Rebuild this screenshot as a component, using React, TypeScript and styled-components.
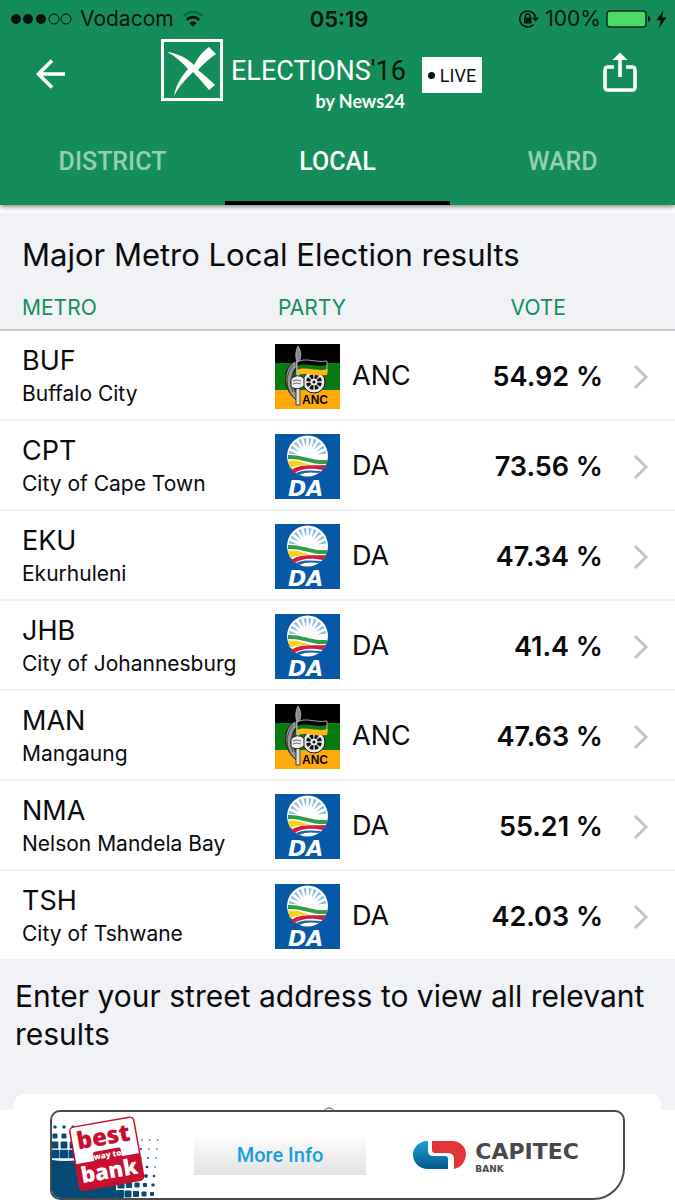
import React from "react";
import styled, { createGlobalStyle } from "styled-components";

const GlobalStyle = createGlobalStyle`
  *, *::before, *::after { box-sizing: border-box; }
  body {
    margin: 0;
    background: #fff;
    color: #0a0a0c;
    font-family: Inter, "Liberation Sans", sans-serif;
  }
  h1, h2, p { margin: 0; font-weight: 400; }
  svg { flex: none; overflow: visible; }
`;

const green = "#148d5b";
const pale = "#f1f2f5";

const Screen = styled.div`
  min-height: 100vh;
  display: flex;
  flex-direction: column;
`;

const Header = styled.header`
  background: ${green};
  box-shadow: 0 1px 6px rgba(0, 0, 0, 0.6);
  margin-bottom: 8px;
`;

const StatusBar = styled.div`
  display: grid;
  grid-template-columns: 1fr auto 1fr;
  align-items: center;
  height: 37px;
  padding: 0 8px 0 11px;
  font-size: 21px;
  line-height: 26px;
  color: #06140d;
`;

const StatusGroup = styled.div<{ $end?: boolean }>`
  display: flex;
  align-items: center;
  justify-content: ${(p) => (p.$end ? "flex-end" : "flex-start")};
  gap: ${(p) => (p.$end ? 5 : 8)}px;
`;

const Clock = styled.time`
  font-weight: 600;
  font-size: 22px;
`;

const TitleBar = styled.div`
  display: grid;
  grid-template-columns: 1fr auto 1fr;
  align-items: start;
  height: 80px;
  padding: 0 37px 0 34px;
`;

const IconButton = styled.button<{ $end?: boolean }>`
  justify-self: ${(p) => (p.$end ? "end" : "start")};
  display: flex;
  padding: 0;
  margin-top: 12px;
  border: 0;
  background: none;
  color: #fff;
  cursor: pointer;
`;

const Brand = styled.div`
  display: flex;
  align-items: flex-start;
  gap: 8px;
  padding-top: 2px;
  margin-right: 29px;
`;

const Wordmark = styled.h1`
  display: flex;
  flex-direction: column;
  width: 174px;
  padding-top: 12px;
  color: #fff;
`;

const WordmarkName = styled.span`
  font-family: Roboto, sans-serif;
  font-size: 27px;
  line-height: 40px;
  white-space: nowrap;
`;

const Year = styled.span`
  color: #06140d;
`;

const Byline = styled.span`
  align-self: flex-end;
  font-family: Lato, sans-serif;
  font-weight: 700;
  font-size: 18px;
  line-height: 20px;
`;

const LiveTag = styled.span`
  display: flex;
  align-items: center;
  justify-content: center;
  gap: 5px;
  width: 60px;
  height: 36px;
  margin: 18px 0 0 9px;
  background: #fff;
  color: #06140d;
  font-family: Roboto, sans-serif;
  font-size: 18px;
`;

const LiveDot = styled.span`
  width: 7px;
  height: 7px;
  border-radius: 50%;
  background: currentColor;
`;

const Tabs = styled.nav`
  display: grid;
  grid-template-columns: repeat(3, 1fr);
`;

const Tab = styled.button<{ $active?: boolean }>`
  height: 88px;
  padding: 4px 0 0;
  border: 0;
  border-bottom: 4px solid ${(p) => (p.$active ? "#000" : "transparent")};
  background: none;
  color: ${(p) => (p.$active ? "#fff" : "#93d1b2")};
  font-family: Roboto, sans-serif;
  font-weight: 500;
  font-size: 25px;
  cursor: pointer;
`;

const Main = styled.main`
  flex: 1;
  display: flex;
  flex-direction: column;
  background: ${pale};
`;

const Heading = styled.h2`
  padding: 22px 22px 0;
  font-size: 31px;
  line-height: 40px;
`;

const Results = styled.table`
  width: 100%;
  table-layout: fixed;
  border-collapse: collapse;
`;

const Col = styled.col<{ $width?: number }>`
  width: ${(p) => (p.$width ? `${p.$width}px` : "auto")};
`;

const HeadCell = styled.th<{ $left?: number; $right?: number }>`
  height: 55px;
  padding: 12px ${(p) => p.$right ?? 0}px 0 ${(p) => p.$left ?? 0}px;
  border-bottom: 2px solid #c8c8ca;
  color: ${green};
  font-weight: 400;
  font-size: 21px;
  line-height: 26px;
  text-align: ${(p) => (p.$right ? "right" : "left")};
`;

const Row = styled.tr`
  height: 90px;
  background: #fff;
  border-bottom: 2px solid #f0f0f2;
  &:last-child {
    height: 89px;
    border-bottom: 0;
  }
`;

const Cell = styled.td<{ $first?: boolean }>`
  padding: ${(p) => (p.$first ? "4px 0 0 22px" : "2px 0 0")};
  text-align: left;
  font-weight: 400;
`;

const Code = styled.div`
  font-size: 27px;
  line-height: 34px;
`;

const City = styled.div`
  font-size: 21px;
  line-height: 32px;
  white-space: nowrap;
`;

const Party = styled.div`
  display: flex;
  align-items: center;
  gap: 12px;
  font-size: 27px;
  line-height: 36px;
`;

const Vote = styled.td`
  padding: 2px 0 0;
  text-align: right;
  font-weight: 600;
  font-size: 27px;
  white-space: nowrap;
`;

const RowLink = styled.a`
  display: flex;
  padding-left: 29px;
  color: #c3c3c8;
`;

const Prompt = styled.p`
  padding: 18px 15px 0;
  font-size: 30px;
  line-height: 38px;
`;

const SearchCard = styled.section`
  flex: 1 0 16px;
  display: flex;
  justify-content: center;
  max-height: 16px;
  margin: 41px 14px 0;
  padding: 13px 18px 0 0;
  overflow: hidden;
  border-radius: 10px 10px 0 0;
  background: #fff;
`;

const AdBar = styled.footer`
  position: sticky;
  bottom: 0;
  padding: 0 50px;
  background: #fff;
`;

const Ad = styled.div`
  display: flex;
  align-items: center;
  height: 90px;
  padding-right: 44px;
  overflow: hidden;
  border: 2px solid #4c4a4b;
  border-radius: 10px 10px 32px 10px;
  background: #fff;
`;

const MoreInfo = styled.button`
  width: 172px;
  height: 40px;
  margin-left: 32px;
  border: 0;
  background: linear-gradient(#fdfdfd, #e2e3e5);
  color: #1c9ddb;
  font-family: Roboto, sans-serif;
  font-weight: 500;
  font-size: 20px;
  cursor: pointer;
`;

const Capitec = styled.div`
  display: flex;
  align-items: center;
  gap: 9px;
  margin-left: auto;
`;

const CapitecName = styled.div`
  padding-top: 4px;
  font-family: "DejaVu Sans", sans-serif;
  font-weight: 700;
  font-size: 22px;
  line-height: 24px;
  color: #48474a;
`;

const CapitecSub = styled.div`
  font-size: 9px;
  line-height: 10px;
`;

const SignalDots = () => (
  <svg width="61" height="12" viewBox="0 0 61 12" aria-hidden="true">
    {[5, 17, 30].map((x) => (
      <circle key={x} cx={x} cy="6" r="5" fill="#06140d" />
    ))}
    {[43, 55].map((x) => (
      <circle key={x} cx={x} cy="6" r="5" fill="none" stroke="#06140d" />
    ))}
  </svg>
);

const Wifi = () => (
  <svg width="22" height="18" viewBox="0 0 22 18" fill="none" aria-hidden="true">
    <path d="M1.500 6.200C7 .6 15 .6 20.500 6.200" stroke="#0d6c42" strokeWidth="2.400" />
    <path d="M4.600 10C8.400 6.200 13.600 6.200 17.400 10" stroke="#06140d" strokeWidth="2.600" />
    <path d="M7.300 13c2.200-2 5.200-2 7.400 0L11 16.800z" fill="#06140d" />
  </svg>
);

const RotationLock = () => (
  <svg width="22" height="20" viewBox="0 0 22 20" fill="none" stroke="#06140d" aria-hidden="true">
    <path d="M15.500 15.500A8 8 0 1 1 17.500 8" strokeWidth="1.500" />
    <path d="M14 8.500h7l-3.400 4z" fill="#06140d" stroke="none" />
    <rect x="6" y="8.500" width="7.500" height="6" fill="#06140d" stroke="none" />
    <path d="M7.500 9V7a2.200 2.200 0 0 1 4.400 0v2" strokeWidth="1.400" />
  </svg>
);

const Battery = () => (
  <svg width="45" height="18" viewBox="0 0 45 18" aria-hidden="true">
    <rect x="1" y="1" width="39" height="16" rx="3" fill="#4cd964" stroke="#0a2c1b" strokeWidth="1.500" />
    <path d="M42 6q2.500 1 2.500 3T42 12z" fill="#06140d" />
  </svg>
);

const Bolt = () => (
  <svg width="11" height="18" viewBox="0 0 11 18" aria-hidden="true">
    <path d="M7.500 0 .5 10.200h4L3 18l7.500-10.600H6.300z" fill="#06140d" />
  </svg>
);

const BackArrow = () => (
  <svg width="34" height="50" viewBox="0 0 34 50" fill="none" stroke="currentColor" strokeWidth="3.600" aria-hidden="true">
    <path d="M31 25H4M18 11.500 4.500 25 18 38.500" />
  </svg>
);

const Share = () => (
  <svg width="38" height="44" viewBox="0 0 38 44" fill="none" stroke="currentColor" strokeWidth="3.600" aria-hidden="true">
    <path d="M14 18H7.500a2.500 2.500 0 0 0-2.500 2.500v18A2.500 2.500 0 0 0 7.500 41h25a2.500 2.500 0 0 0 2.500-2.500v-18a2.500 2.500 0 0 0-2.500-2.500H26" />
    <path d="M20 28V9" />
    <path d="M12.500 11 20 3.500 27.500 11z" fill="currentColor" stroke="none" />
  </svg>
);

const BallotCross = () => (
  <svg width="62" height="62" viewBox="0 0 62 62" aria-hidden="true">
    <rect x="1.500" y="1.500" width="59" height="59" fill="none" stroke="#fff" strokeWidth="3" />
    <path d="M6 13C16 14 26 19 33 26C37 18 42 12 48 8L55 15C48 20 42 25 37 31C43 36 49 41 54 46L48 51C42 44 37 38 32 33C25 40 18 47 13 57C15 46 20 38 27 30C21 23 14 17 6 13Z" fill="#fff" />
  </svg>
);

const AncLogo = () => (
  <svg width="65" height="65" viewBox="0 0 65 65" role="img" aria-label="ANC flag">
    <path d="M0 0h65v19H0z" fill="#000" />
    <path d="M0 19h65v27H0z" fill="#087a12" />
    <path d="M0 46h65v19H0z" fill="#ffa90a" />
    <path d="M21 17C8 22 6 46 23 57l-1-7C16 43 16 29 22 23z" fill="#999" stroke="#111" />
    <path d="M18 21c-6 8-8 18-3 27M20 24c-5 8-5 17-2 24" fill="none" stroke="#333" strokeWidth=".8" />
    <path d="M21 61V17h4v44z" fill="#ddd" stroke="#222" strokeWidth=".8" />
    <path d="M23 2q5 8 1 16h-2q-3-8 1-16z" fill="#888" stroke="#ddd" strokeWidth=".6" />
    <circle cx="39" cy="38" r="11" fill="#eee" stroke="#111" />
    {[0, 45, 90, 135, 180, 225, 270, 315].map((a) => (
      <path key={a} d="M38 34.500 36.800 30.500q2.200-1 4.400 0L40 34.500z" fill="#111" transform={`rotate(${a + 22} 39 38)`} />
    ))}
    <circle cx="39" cy="38" r="1.500" fill="#111" />
    <path d="M22 18c9-5 18 1 30-1v5c-11 3-21-3-30 1z" fill="#050505" />
    <path d="M22 22c9-4 19 2 30-1v5c-11 3-21-3-30 1z" fill="#087a12" />
    <path d="M22 26c9-4 19 2 31-1l-1 6c-11 2-20-3-30 0z" fill="#ffb514" />
    <path d="M22 31V18c9-5 18 1 30-1v9" fill="none" stroke="#ccc" strokeWidth=".8" />
    <path d="M16 35q6-6 13-1v8q-6 5-13 1z" fill="#eee" stroke="#222" />
    <path d="M18 37q4-2 8 0M18 40q4-2 8 0" fill="none" stroke="#333" strokeWidth=".7" />
    <text x="27" y="60" fontFamily="Liberation Sans, sans-serif" fontWeight="700" fontSize="12" fill="#080808">ANC</text>
  </svg>
);

const DaLogo = () => (
  <svg width="65" height="65" viewBox="0 0 65 65" role="img" aria-label="DA emblem">
    <path d="M0 0h65v65H0z" fill="#0759a8" />
    <circle cx="32.500" cy="22" r="20.500" fill="#fff" />
    {[-75, -58, -41, -24, -8, 8, 24, 41, 58, 75].map((a) => (
      <path key={a} d="M31 4h3l-1.500 9z" fill="#8dbbe2" transform={`rotate(${a} 32.500 23)`} />
    ))}
    <path d="M13 21c12-1 24 6 39 5v4c-15 1-26-6-39-5z" fill="#2f9f47" />
    <path d="M13 27c9-2 15 2 23 4-8 0-15 0-21 3z" fill="#f7d417" />
    <path d="M16 36c10-7 22-4 35-5l-3 5c-13-2-19-2-29 3z" fill="#cf1f3c" />
    <path d="M21 39c9-4 17-2 25-2l-2 2c-8-1-14-1-20 2z" fill="#1a61ac" />
    <text x="13" y="62" fontFamily="DejaVu Sans, sans-serif" fontWeight="700" fontStyle="italic" fontSize="22" fill="#fff">DA</text>
  </svg>
);

const Chevron = () => (
  <svg width="18" height="26" viewBox="0 0 18 26" fill="none" stroke="currentColor" strokeWidth="3" aria-hidden="true">
    <path d="M3 3 14 14 3 25" />
  </svg>
);

const dots: { x: number; y: number; r: number }[] = [];
for (let i = 0; i < 4; i++) {
  for (let j = 0; j < 4; j++) dots.push({ x: 3 + i * 9, y: 15 + j * 9, r: 1.6 + j * 0.9 });
}
for (let i = 0; i < 5; i++) {
  for (let j = 0; j < 7; j++) dots.push({ x: 68 + i * 8 + j, y: 82 - j * 9, r: Math.max(0.8, 4 - i * 0.5 - j * 0.4) });
}

const BestBank = () => (
  <svg width="110" height="86" viewBox="0 0 110 86" role="img" aria-label="Best way to bank">
    <path d="M0 48q14 2 26 0l10 38H0z" fill="#054a75" />
    <path d="M24 70h40v16H24z" fill="#054a75" />
    {dots.map((d, i) => (
      <rect key={i} x={d.x - d.r} y={d.y - d.r} width={d.r * 2} height={d.r * 2} rx="1" fill="#054a75" />
    ))}
    <g transform="translate(16 15) rotate(-10)">
      <rect x="1" y="1" width="65" height="64" rx="4" fill="#fff" stroke="#c8102e" strokeWidth="1.500" />
      <path d="M1 38h65v23a4 4 0 0 1-4 4H5a4 4 0 0 1-4-4z" fill="#c8102e" />
      <rect x="20" y="29" width="28" height="11" rx="2" fill="#c8102e" />
      <g fontFamily="Open Sans, sans-serif" fontWeight="800" textAnchor="middle">
        <text x="33" y="24" fontSize="24" fill="#c8102e">best</text>
        <text x="34" y="37" fontSize="8" fill="#fff">way to</text>
        <text x="33" y="58" fontSize="22" fill="#fff">bank</text>
      </g>
    </g>
  </svg>
);

const CapitecMark = () => (
  <svg width="53" height="28" viewBox="0 0 53 28" aria-hidden="true">
    <defs>
      <linearGradient id="capitec-blue" x1="0" y1="0" x2="0" y2="1">
        <stop offset="0" stopColor="#1e9fd4" />
        <stop offset="1" stopColor="#03588a" />
      </linearGradient>
    </defs>
    <path d="M15 0H13C5 1 0 7 0 14s6 14 15 14h20V18q0-3-3-3H20q-5 0-5-5z" fill="url(#capitec-blue)" />
    <path d="M19 0h20c8 0 14 6 14 13s-5 14-12 15V18q0-6-6-6H22q-3 0-3-3z" fill="#e2353b" />
  </svg>
);

const results = [
  { code: "BUF", city: "Buffalo City", party: "ANC", vote: "54.92 %" },
  { code: "CPT", city: "City of Cape Town", party: "DA", vote: "73.56 %" },
  { code: "EKU", city: "Ekurhuleni", party: "DA", vote: "47.34 %" },
  { code: "JHB", city: "City of Johannesburg", party: "DA", vote: "41.4 %" },
  { code: "MAN", city: "Mangaung", party: "ANC", vote: "47.63 %" },
  { code: "NMA", city: "Nelson Mandela Bay", party: "DA", vote: "55.21 %" },
  { code: "TSH", city: "City of Tshwane", party: "DA", vote: "42.03 %" },
];

export default function App() {
  return (
    <>
      <GlobalStyle />
      <Screen>
        <Header>
          <StatusBar>
            <StatusGroup>
              <SignalDots />
              <span>Vodacom</span>
              <Wifi />
            </StatusGroup>
            <Clock>05:19</Clock>
            <StatusGroup $end>
              <RotationLock />
              <span>100%</span>
              <Battery />
              <Bolt />
            </StatusGroup>
          </StatusBar>
          <TitleBar>
            <IconButton aria-label="Back"><BackArrow /></IconButton>
            <Brand>
              <BallotCross />
              <Wordmark>
                <WordmarkName>ELECTIONS<Year>'16</Year></WordmarkName>
                <Byline>by News24</Byline>
              </Wordmark>
              <LiveTag><LiveDot />LIVE</LiveTag>
            </Brand>
            <IconButton $end aria-label="Share"><Share /></IconButton>
          </TitleBar>
          <Tabs>
            <Tab>DISTRICT</Tab>
            <Tab $active aria-current="page">LOCAL</Tab>
            <Tab>WARD</Tab>
          </Tabs>
        </Header>
        <Main>
          <Heading>Major Metro Local Election results</Heading>
          <Results>
            <colgroup>
              <Col />
              <Col $width={200} />
              <Col $width={128} />
              <Col $width={72} />
            </colgroup>
            <thead>
              <tr>
                <HeadCell scope="col" $left={22}>METRO</HeadCell>
                <HeadCell scope="col" $left={3}>PARTY</HeadCell>
                <HeadCell scope="col" $right={37}>VOTE</HeadCell>
                <HeadCell as="td" />
              </tr>
            </thead>
            <tbody>
              {results.map((r) => (
                <Row key={r.code}>
                  <Cell as="th" scope="row" $first>
                    <Code>{r.code}</Code>
                    <City>{r.city}</City>
                  </Cell>
                  <Cell>
                    <Party>
                      {r.party === "ANC" ? <AncLogo /> : <DaLogo />}
                      {r.party}
                    </Party>
                  </Cell>
                  <Vote>{r.vote}</Vote>
                  <Cell>
                    <RowLink href={`#${r.code}`} aria-label={`${r.city} details`}><Chevron /></RowLink>
                  </Cell>
                </Row>
              ))}
            </tbody>
          </Results>
          <Prompt>Enter your street address to view all relevant results</Prompt>
          <SearchCard>
            <svg width="14" height="14" viewBox="0 0 14 14" aria-hidden="true">
              <circle cx="7" cy="7" r="6" fill="none" stroke="#555" />
            </svg>
          </SearchCard>
        </Main>
        <AdBar>
          <Ad>
            <BestBank />
            <MoreInfo>More Info</MoreInfo>
            <Capitec>
              <CapitecMark />
              <CapitecName>
                CAPITEC
                <CapitecSub>BANK</CapitecSub>
              </CapitecName>
            </Capitec>
          </Ad>
        </AdBar>
      </Screen>
    </>
  );
}
